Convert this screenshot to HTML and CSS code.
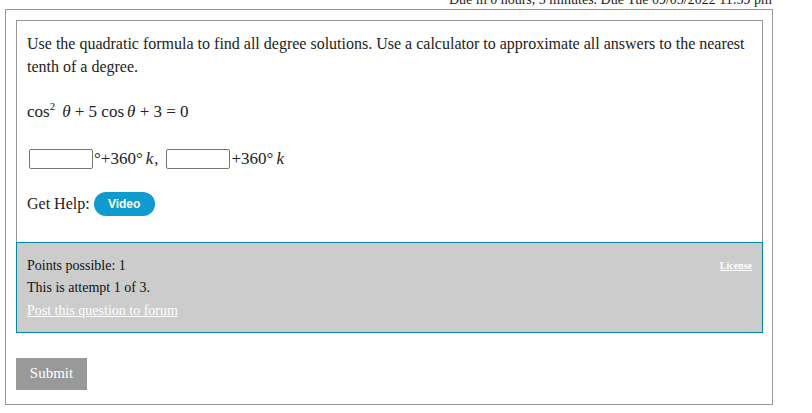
FILE: index.html
```html
<!DOCTYPE html>
<html lang="en">

<head>
  <meta charset="UTF-8">
  <meta name="viewport" content="width=device-width, initial-scale=1.0">
  <title>Question</title>
  <link rel="stylesheet" href="styles.css">
</head>

<body>
  <div class="due">Due in 0 hours, 5 minutes. Due Tue 09/05/2022 11:59 pm</div>
  <div class="wrap">
    <!-- 题目 -->
    <div class="question">
      <p class="text">Use the quadratic formula to find all degree solutions. Use a calculator to approximate all answers to the nearest tenth of a degree.</p>
      <p class="math">cos<sup>2</sup><i>&#952;</i> + 5 cos<i>&#952;</i> + 3 = 0</p>
      <p class="answers">
        <input type="text" class="ans"><span class="math-inline">&#176;+360&#176;<i>k</i>,</span>
        <input type="text" class="ans"><span class="math-inline">+360&#176;<i>k</i></span>
      </p>
      <p class="help">Get Help: <button class="video">Video</button></p>
    </div>
    <!-- 信息 -->
    <div class="info">
      <a href="#" class="license">License</a>
      <p>Points possible: 1</p>
      <p>This is attempt 1 of 3.</p>
      <p><a href="#" class="forum">Post this question to forum</a></p>
    </div>
    <input type="button" value="Submit" class="submit">
  </div>
</body>

</html>
```

FILE: styles.css
```css
body {
  margin: 0;
  padding: 0;
  background-color: #fff;
  font-family: "Liberation Serif", "Times New Roman", serif;
  color: #222;
}

.due {
  width: 772px;
  height: 9px;
  overflow: hidden;
  text-align: right;
  font-size: 14px;
  line-height: 18px;
}

.due::before {
  content: "";
  display: block;
  margin-top: -9px;
}

.wrap {
  width: 747px;
  margin-left: 5px;
  padding: 10px 9px 14px 10px;
  border: 1px solid #999;
}

.question {
  border: 1px solid #999;
  border-bottom: none;
  padding: 11px 10px 26px;
}

.question p {
  margin: 0;
  font-size: 16px;
  line-height: 23px;
}

.question .math {
  margin-top: 17px;
  font-size: 17px;
}

.math sup {
  font-size: 11px;
  margin-right: 4px;
}

.math i {
  margin-left: 3px;
}

.question .answers {
  margin-top: 24px;
  display: flex;
  align-items: center;
  height: 24px;
}

.ans {
  width: 64px;
  height: 20px;
  box-sizing: border-box;
  border: 1px solid #767676;
  border-radius: 2px;
  margin: 0 1px 0 2px;
  padding: 0;
}

.math-inline {
  font-size: 17px;
  margin-right: 6px;
  word-spacing: 1px;
}

.math-inline i {
  margin-left: 3px;
  margin-right: 1px;
}

.question .help {
  margin-top: 21px;
  display: flex;
  align-items: center;
  height: 24px;
}

.video {
  width: 61px;
  height: 24px;
  margin-left: 4px;
  border: none;
  border-radius: 12px;
  background-color: #0f9bcf;
  color: #fff;
  font-family: "Liberation Sans", Arial, sans-serif;
  font-weight: bold;
  font-size: 12px;
}

.info {
  height: 68px;
  padding: 12px 10px 9px;
  border: 1px solid #0087a8;
  background-color: #ccc;
}

.info p {
  margin: 0;
  font-size: 14px;
  line-height: 22.5px;
  color: #111;
}

.info a {
  color: #fff;
}

.license {
  float: right;
  font-size: 10px;
  font-weight: bold;
  line-height: 22px;
}

.submit {
  display: block;
  width: 71px;
  height: 32px;
  margin-top: 25px;
  border: none;
  background-color: #999;
  color: #fff;
  font-family: "Liberation Serif", "Times New Roman", serif;
  font-size: 15px;
}
```
